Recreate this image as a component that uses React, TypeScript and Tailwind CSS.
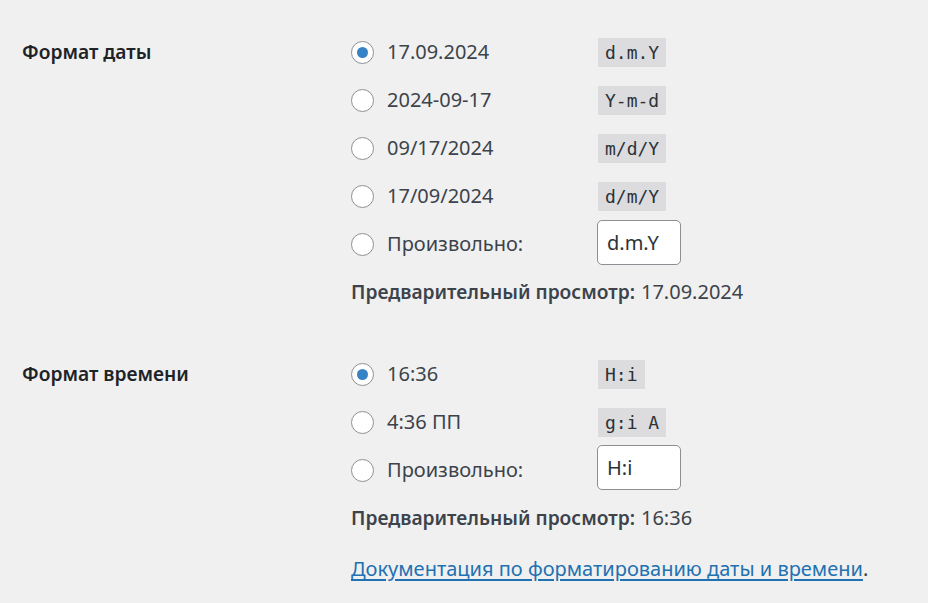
import { useState } from "react";

const dateOptions = [
  { label: "17.09.2024", code: "d.m.Y" },
  { label: "2024-09-17", code: "Y-m-d" },
  { label: "09/17/2024", code: "m/d/Y" },
  { label: "17/09/2024", code: "d/m/Y" },
];

const timeOptions = [
  { label: "16:36", code: "H:i" },
  { label: "4:36 ПП", code: "g:i A" },
];

const Radio = ({ checked, onClick }: { checked: boolean; onClick: () => void }) => (
  <button
    onClick={onClick}
    className="w-[23px] h-[23px] rounded-full border border-[#8c8f94] bg-white flex items-center justify-center shrink-0"
  >
    {checked && <span className="w-[11px] h-[11px] rounded-full bg-[#3582c4]" />}
  </button>
);

const FormatGroup = ({
  title,
  options,
  custom,
  preview,
  inputShift,
}: {
  title: string;
  options: { label: string; code: string }[];
  custom: string;
  preview: string;
  inputShift: string;
}) => {
  const [selected, setSelected] = useState(0);

  return (
    <div className="flex">
      <div className="w-[329px] h-[48px] flex items-center font-semibold text-[19.2px] text-[#1d2327]">{title}</div>
      <div className="flex flex-col">
        {options.map((o, i) => (
          <div key={o.code} className="h-[48px] flex items-center">
            <Radio checked={selected === i} onClick={() => setSelected(i)} />
            <span className="ml-[13px] w-[211px]">{o.label}</span>
            <code
              className="bg-[#dcdcde] px-[7px] h-[29px] flex items-center text-[18px] text-[#2c3338]"
              style={{ fontFamily: "'DejaVu Sans Mono', 'Liberation Mono', monospace" }}
            >
              {o.code}
            </code>
          </div>
        ))}
        <div className="h-[48px] flex items-center">
          <Radio checked={selected === options.length} onClick={() => setSelected(options.length)} />
          <span className="ml-[13px] w-[210px]">Произвольно:</span>
          <input
            defaultValue={custom}
            className={`w-[84px] h-[45px] rounded-[5px] border border-[#8c8f94] bg-white px-[9px] text-[#2c3338] outline-none ${inputShift}`}
          />
        </div>
        <div className="h-[48px] flex items-center">
          <span className="font-semibold text-[19.2px]">Предварительный просмотр:</span>
          <span className="ml-[6px]">{preview}</span>
        </div>
      </div>
    </div>
  );
};

export default function App() {
  return (
    <div
      className="w-[928px] h-[603px] bg-[#f0f0f1] text-[#3c434a] text-[20px] pl-[22px] pt-[28px] overflow-hidden"
      style={{ fontFamily: "'Noto Sans', 'Open Sans', sans-serif" }}
    >
      <FormatGroup title="Формат даты" options={dateOptions} custom="d.m.Y" preview="17.09.2024" inputShift="mb-[4px]" />
      <div className="h-[34px]" />
      <FormatGroup title="Формат времени" options={timeOptions} custom="H:i" preview="16:36" inputShift="mb-[6px]" />
      <div className="pl-[329px] h-[50px] flex items-center mt-[2px]">
        <a href="#" className="text-[#2271b1] underline underline-offset-[3px]">
          Документация по форматированию даты и времени
        </a>
        <span>.</span>
      </div>
    </div>
  );
}
